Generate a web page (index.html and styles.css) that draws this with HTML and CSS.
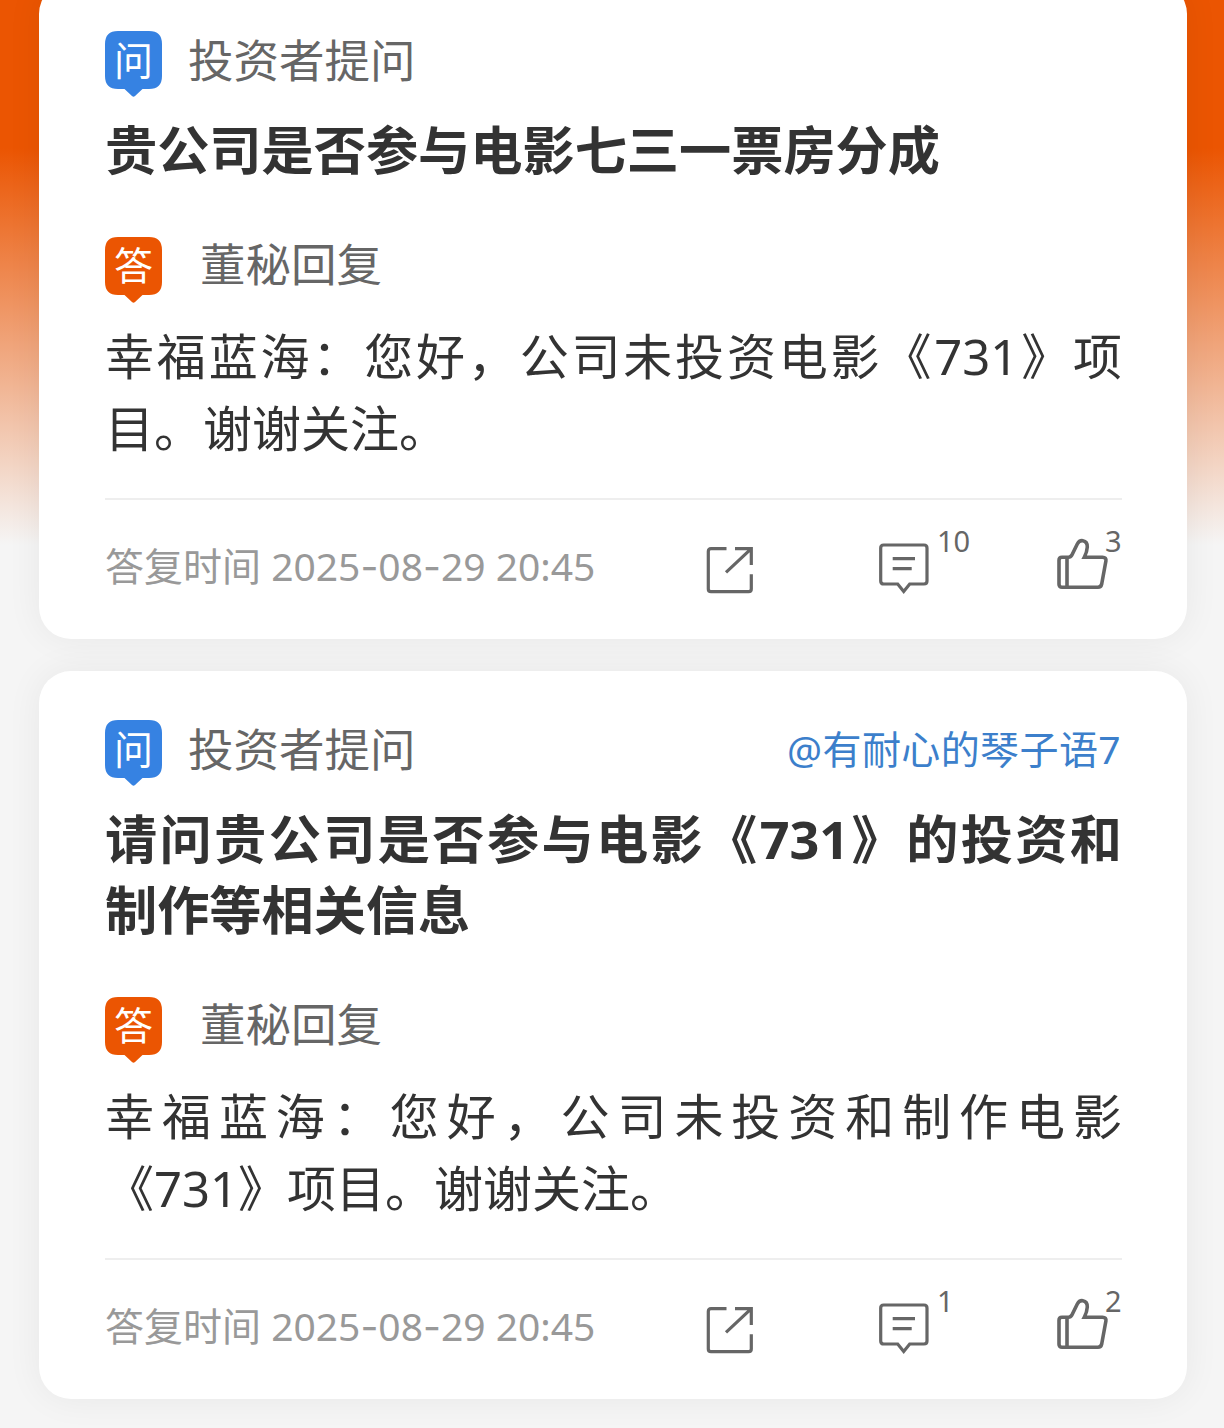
FILE: index.html
```
<!DOCTYPE html>
<html lang="zh-CN">
<head>
  <meta charset="utf-8">
  <meta name="viewport" content="width=device-width, initial-scale=1">
  <title>投资者问答</title>
  <link rel="stylesheet" href="styles.css">
</head>
<body>
  <!-- shared icons -->
  <svg class="sprite" width="0" height="0">
    <symbol id="icon-bubble" viewBox="0 0 57 66">
      <path d="M13 0H44Q57 0 57 13V45Q57 58 44 58H37.500L30 65Q28.500 66.500 27 65L19.500 58H13Q0 58 0 45V13Q0 0 13 0Z" fill="currentColor"/>
    </symbol>
    <symbol id="icon-share" viewBox="0 0 48 48">
      <path d="M20.500 2.700H5Q2.300 2.700 2.300 5.400V43Q2.300 45.700 5 45.700H42.600Q45.300 45.700 45.300 43V28.300M29 2.700H45.300V19M45.300 2.700L20 26.300" fill="none" stroke="currentColor" stroke-width="3.200"/>
    </symbol>
    <symbol id="icon-comment" viewBox="0 0 52 54">
      <path d="M5.700 3H46Q49 3 49 6V39Q49 42 46 42H31.700L25.700 49.500L19.700 42H5.700Q2.700 42 2.700 39V6Q2.700 3 5.700 3ZM14.700 16.700H37M14.700 26.700H33.700" fill="none" stroke="currentColor" stroke-width="3.200"/>
    </symbol>
    <symbol id="icon-like" viewBox="0 0 53 54">
      <path d="M6 20.300H12.500Q14.700 20.300 15.800 18.200L21.300 7Q23.300 3.200 26.800 3.700Q31.500 4.500 31.300 10Q31 15 28.300 20.300H46.500Q50.600 20.300 49.900 24L45.700 47Q45 50.200 42 50.200H6Q3 50.200 3 47.200V23.300Q3 20.300 6 20.300ZM11 20.300V50.200" fill="none" stroke="currentColor" stroke-width="3.600"/>
    </symbol>
  </svg>

  <main class="feed">
    <article class="card">
      <div class="row">
        <span class="badge ask"><svg><use href="#icon-bubble"/></svg><b>问</b></span>
        <span class="label">投资者提问</span>
      </div>
      <h2>贵公司是否参与电影七三一票房分成</h2>
      <div class="row reply">
        <span class="badge answer"><svg><use href="#icon-bubble"/></svg><b>答</b></span>
        <span class="label">董秘回复</span>
      </div>
      <p class="text">幸福蓝海：您好，公司未投资电影《731》项目。谢谢关注。</p>
      <div class="footer">
        <span class="time">答复时间 2025<span class="dash">-</span>08<span class="dash">-</span>29 20:45</span>
        <a class="share"><svg><use href="#icon-share"/></svg></a>
        <a class="comment"><svg><use href="#icon-comment"/></svg><i>10</i></a>
        <a class="like"><svg><use href="#icon-like"/></svg><i>3</i></a>
      </div>
    </article>

    <article class="card">
      <div class="row">
        <span class="badge ask"><svg><use href="#icon-bubble"/></svg><b>问</b></span>
        <span class="label">投资者提问</span>
        <a class="user">@有耐心的琴子语7</a>
      </div>
      <h2>请问贵公司是否参与电影《731》的投资和制作等相关信息</h2>
      <div class="row reply">
        <span class="badge answer"><svg><use href="#icon-bubble"/></svg><b>答</b></span>
        <span class="label">董秘回复</span>
      </div>
      <p class="text">幸福蓝海：您好，公司未投资和制作电影《731》项目。谢谢关注。</p>
      <div class="footer">
        <span class="time">答复时间 2025<span class="dash">-</span>08<span class="dash">-</span>29 20:45</span>
        <a class="share"><svg><use href="#icon-share"/></svg></a>
        <a class="comment"><svg><use href="#icon-comment"/></svg><i>1</i></a>
        <a class="like"><svg><use href="#icon-like"/></svg><i>2</i></a>
      </div>
    </article>
  </main>
</body>
</html>
```
FILE: styles.css
```
* { box-sizing: border-box; }
html { background: #f5f5f5; }
body {
  margin: 0;
  height: 1428px;
  overflow: hidden;
  font-family: "Noto Sans", "Noto Sans CJK SC", sans-serif;
  color: #333;
  background: linear-gradient(#eb5502 0, #eb5502 148px, #f5f5f5 545px) no-repeat;
}
.sprite { display: none; }

.feed { display: flex; flex-direction: column; gap: 32px; margin-top: -18px; padding: 0 37px 0 39px; }
.card { padding: 49px 65px 0 66px; border-radius: 32px; background: #fff; box-shadow: 0 0 36px rgba(0, 0, 0, .06); }

.row { display: flex; align-items: center; gap: 26px; height: 58px; }
.row.reply { gap: 38px; }
.badge { display: grid; width: 57px; height: 58px; color: #3682e2; }
.badge.answer { color: #eb5502; }
.badge svg, .badge b { grid-area: 1 / 1; }
.badge svg { width: 57px; height: 66px; }
.badge b { font-size: 39px; line-height: 57px; font-weight: 400; text-align: center; color: #fff; }
.reply .badge b { line-height: 55px; }
.label { font-size: 45.500px; line-height: 58px; color: #666; }
.reply .label { padding-bottom: 4px; }
.user { margin-left: auto; padding: 1px 1px 0 0; font-size: 39px; line-height: 58px; letter-spacing: .400px; color: #3c7fcb; }

h2 { margin: 25px 0 51px; font-size: 52.200px; line-height: 71.500px; font-weight: 700; text-align: justify; }
.text { margin: 25px 0 34px; font-size: 49px; line-height: 72px; text-align: justify; }

.footer { display: flex; height: 141px; padding-top: 38px; border-top: 2px solid #eee; color: #666; }
.footer svg { display: block; width: 100%; height: 100%; }
.time { width: 601px; margin-top: -1px; font-size: 39px; line-height: 57px; color: #999; white-space: nowrap; }
.dash { font-family: Inter, sans-serif; }
.share { width: 48px; height: 48px; margin-top: 8px; }
.comment { position: relative; width: 52px; height: 54px; margin: 4px 0 0 124px; }
.like { position: relative; width: 53px; height: 54px; margin: -1px 0 0 126px; }
/* counters sit on the icon's top right corner */
.footer i { position: absolute; font-size: 29px; line-height: 30px; font-style: normal; }
.comment i { top: -16px; left: 59px; }
.like i { top: -11px; left: 49px; }
```
